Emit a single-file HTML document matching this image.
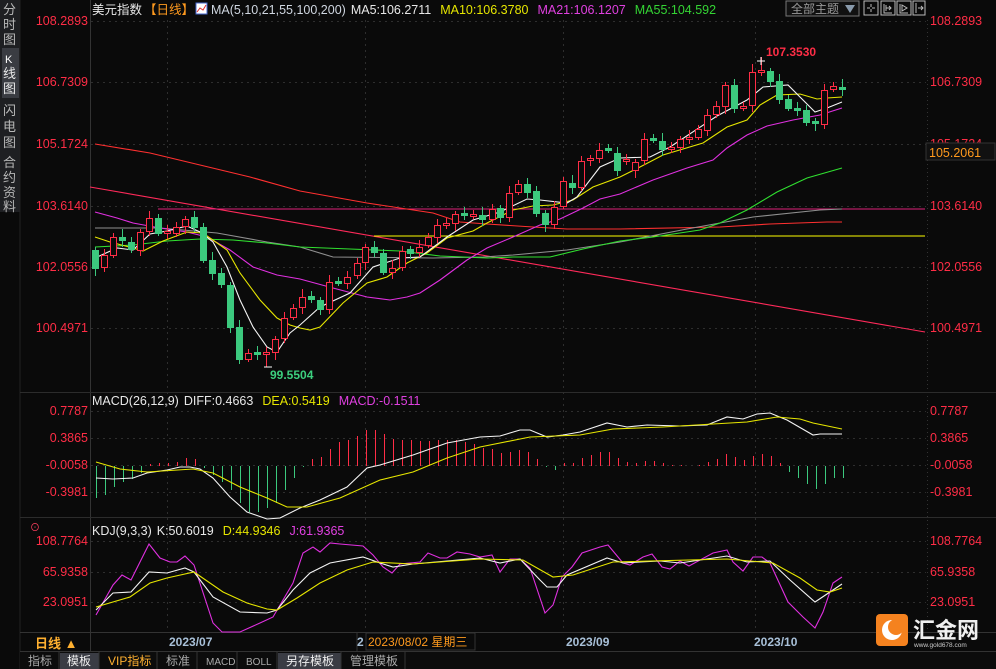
<!DOCTYPE html>
<html><head><meta charset="utf-8">
<style>
html,body{margin:0;padding:0;background:#0a0a0a;width:996px;height:669px;overflow:hidden}
svg{display:block}
text{font-family:"Liberation Sans","Noto Sans CJK SC",sans-serif}
.ax{fill:#ff2d46;font-size:12.5px}
.cn{font-family:"Liberation Sans","Noto Sans CJK SC",sans-serif}
</style></head><body>
<svg id="s" width="996" height="669" viewBox="0 0 996 669" xmlns="http://www.w3.org/2000/svg">
<rect width="996" height="669" fill="#0a0a0a"/>
<rect x="0" y="0" width="20" height="212" fill="#1e1f22"/>
<rect x="2" y="48" width="17" height="50" fill="#3a3c42"/>
<g fill="#b8b8b8" font-size="13" class="cn">
<text x="3" y="14">分</text><text x="3" y="29">时</text><text x="3" y="44">图</text>
<text x="5" y="63" fill="#fff" font-size="11">K</text><text x="3" y="78" fill="#e8e8e8">线</text><text x="3" y="93" fill="#e8e8e8">图</text>
<text x="3" y="115">闪</text><text x="3" y="131">电</text><text x="3" y="147">图</text>
<text x="3" y="167">合</text><text x="3" y="182">约</text><text x="3" y="197">资</text><text x="3" y="211">料</text>
</g>
<line x1="20" y1="0" x2="20" y2="669" stroke="#222" />
<line x1="90.5" y1="0" x2="90.5" y2="652" stroke="#333"/>
<line x1="927.5" y1="20" x2="927.5" y2="632" stroke="#333" stroke-dasharray="1,3"/>
<line x1="20" y1="392.5" x2="996" y2="392.5" stroke="#2c2c2c"/>
<line x1="20" y1="517.5" x2="996" y2="517.5" stroke="#2c2c2c"/>
<line x1="20" y1="632.5" x2="996" y2="632.5" stroke="#333"/>
<line x1="20" y1="651.5" x2="996" y2="651.5" stroke="#333"/>
<g id="grid" stroke="#2e2e2e" stroke-dasharray="2,4"></g>
<text x="92" y="14" font-size="12.5" fill="#e8e8e8">美元指数</text>
<text x="144" y="14" font-size="12.5" fill="#ff9a1e">【日线】</text>
<rect x="196" y="3" width="11" height="11" fill="#fff" stroke="#4466cc"/>
<polyline points="197,12 200,8 203,10 206,5" fill="none" stroke="#e03030" stroke-width="1"/>
<text x="211" y="14" font-size="12.5"><tspan fill="#cfd6e0">MA(5,10,21,55,100,200)</tspan><tspan fill="#e8e8e8" dx="5">MA5:106.2711</tspan><tspan fill="#e6e600" dx="9">MA10:106.3780</tspan><tspan fill="#e040e0" dx="9">MA21:106.1207</tspan><tspan fill="#34d434" dx="9">MA55:104.592</tspan></text>
<rect x="786" y="1" width="73" height="15" fill="#111" stroke="#777"/>
<text x="791" y="13" font-size="12" fill="#999">全部主题</text>
<path d="M845 5 L855 5 L850 13 Z" fill="#8899aa"/>
<g fill="none" stroke="#bbb">
<rect x="864" y="1" width="14" height="14"/><rect x="881" y="1" width="14" height="14"/><rect x="897" y="1" width="14" height="14"/><rect x="913" y="1" width="12" height="14"/>
<path d="M871 4v3M871 9v3M867 8h3M872 8h3"/>
<path d="M884 4v9h8M886 5v6M889 6l2 2-2 2M886 8h5"/>
<path d="M900 4v9h8M902 5l5 3-5 3z"/>
<path d="M916 3v10M918 8h5M921 6l2 2-2 2"/>
</g>
<g class="ax" id="axl"></g>
<rect x="926" y="143" width="69" height="17" fill="#111" stroke="#333"/>
<text x="929" y="157" font-size="12.5" fill="#ff9a1e">105.2061</text>
<g id="lines" fill="none" stroke-width="1.1"></g>
<g id="candles"></g>
<text x="766" y="56" font-size="12" font-weight="bold" fill="#ff2d46">107.3530</text>
<text x="270" y="379" font-size="12" font-weight="bold" fill="#3ccf7e">99.5504</text>
<text x="92" y="405" font-size="12.5"><tspan fill="#e8e8e8">MACD(26,12,9)</tspan><tspan fill="#e8e8e8" dx="5">DIFF:0.4663</tspan><tspan fill="#e6e600" dx="9">DEA:0.5419</tspan><tspan fill="#e040e0" dx="9">MACD:-0.1511</tspan></text>
<g id="macd"></g>
<text x="30" y="531" font-size="10" fill="#ff4060">⊙</text>
<text x="92" y="535" font-size="12.5"><tspan fill="#e8e8e8">KDJ(9,3,3)</tspan><tspan fill="#e8e8e8" dx="5">K:50.6019</tspan><tspan fill="#e6e600" dx="9">D:44.9346</tspan><tspan fill="#e040e0" dx="9">J:61.9365</tspan></text>
<g id="kdj" fill="none" stroke-width="1.1"></g>
<text x="35" y="648" font-size="13" fill="#ffb030" font-weight="bold">日线 ▲</text>
<text x="169" y="646" font-size="12" fill="#a8c0d8" font-weight="bold">2023/07</text>
<line x1="357" y1="633" x2="357" y2="651" stroke="#333"/>
<text x="357" y="646" font-size="12" fill="#a8c0d8" font-weight="bold">2</text>
<rect x="366" y="633" width="109" height="17" fill="#0a0a0a" stroke="#333"/>
<text x="368" y="646" font-size="12" fill="#ff9a1e">2023/08/02 星期三</text>
<text x="566" y="646" font-size="12" fill="#a8c0d8" font-weight="bold">2023/09</text>
<text x="754" y="646" font-size="12" fill="#a8c0d8" font-weight="bold">2023/10</text>
<rect x="20" y="652" width="976" height="17" fill="#0c0c0c"/>
<rect x="60" y="653" width="39" height="16" fill="#3a3c44"/>
<rect x="278" y="653" width="63" height="16" fill="#3a3c44"/>
<g font-size="12" fill="#aaa">
<text x="28" y="665">指标</text><text x="67" y="665" fill="#eee">模板</text><text x="108" y="665" fill="#ffb030">VIP指标</text><text x="166" y="665">标准</text>
<text x="206" y="665" font-family="Liberation Mono" font-size="10">MACD</text><text x="246" y="665" font-family="Liberation Mono" font-size="10">BOLL</text>
<text x="286" y="665" fill="#eee">另存模板</text><text x="350" y="665">管理模板</text>
</g>
<g stroke="#333"><line x1="59" y1="652" x2="59" y2="669"/><line x1="99" y1="652" x2="99" y2="669"/><line x1="157" y1="652" x2="157" y2="669"/><line x1="197" y1="652" x2="197" y2="669"/><line x1="237" y1="652" x2="237" y2="669"/><line x1="277" y1="652" x2="277" y2="669"/><line x1="341" y1="652" x2="341" y2="669"/><line x1="405" y1="652" x2="405" y2="669"/></g>
<rect x="876" y="614" width="32" height="32" rx="4" fill="#f5821f"/>
<circle cx="892" cy="630" r="10" fill="#fff"/>
<circle cx="896" cy="627" r="8" fill="#f5821f"/>
<text x="913" y="638" font-size="22" fill="#f0f0f0" font-weight="bold">汇金网</text>
<text x="914" y="647" font-size="6.5" fill="#ccc">www.gold678.com</text>
<script>
var NS="http://www.w3.org/2000/svg";
function el(p,t,a){var e=document.createElementNS(NS,t);for(var k in a)e.setAttribute(k,a[k]);document.getElementById(p).appendChild(e);return e;}
[21,82,144,206,267,328,411,438,465,492,541,572,602].forEach(function(y){el("grid","line",{x1:91,y1:y+0.5,x2:926,y2:y+0.5});});
[167,365,563,755].forEach(function(x){el("grid","line",{x1:x+0.5,y1:20,x2:x+0.5,y2:632});});
var L=[["108.2893",25],["106.7309",86],["105.1724",148],["103.6140",210],["102.0556",271],["100.4971",332],["0.7787",415],["0.3865",442],["-0.0058",469],["-0.3981",496],["108.7764",545],["65.9358",576],["23.0951",606]];
L.forEach(function(l){var t=el("axl","text",{x:88,y:l[1],"text-anchor":"end"});t.textContent=l[0];var u=el("axl","text",{x:930,y:l[1]});u.textContent=l[0];});
function pl(g,c,pts,w){el(g,"polyline",{points:pts,stroke:c,"stroke-width":w||1.1,fill:"none"});}
pl("lines","#ff2a5a","90,187 925,332");
pl("lines","#e0207a","158,209 925,209");
pl("lines","#ffff00","374,236 925,236");
pl("lines","#ff3030","95,144 150,153 200,165 250,177 300,191 367,203 433,213 460,222 487,224 533,227 567,229 620,229 720,227 770,224 827,222 842,222");
pl("lines","#909090","95,228 160,228 217,233 267,242 300,247 333,257 433,258 483,257 513,255 567,250 620,242 687,229 753,217 820,210 842,209");
pl("lines","#30e030","95,247 133,245 167,241 200,239 233,240 267,243 300,247 350,249 400,251 440,256 487,258 513,257 550,257 583,249 620,241 653,237 700,230 720,223 747,210 777,192 807,178 842,168");
pl("lines","#e030e0","95,212 117,218 133,223 160,228 187,232 207,237 230,250 253,267 277,275 300,279 333,288 367,297 390,300 407,297 420,293 440,280 467,260 487,248 513,237 540,225 560,219 583,208 600,199 620,194 653,180 687,168 713,160 727,148 747,135 767,126 793,120 820,115 842,108");
pl("lines","#e6e600","95,237 110,242 133,248 143,251 163,241 187,232 203,233 227,250 240,273 260,300 277,318 290,325 300,328 310,330 320,327 343,303 367,283 387,277 407,263 427,253 447,238 473,231 487,223 513,210 533,206 553,205 573,200 593,187 620,177 640,167 663,155 703,143 727,127 747,120 760,105 777,95 800,94 817,99 827,98 842,97");
pl("lines","#f4f4f4","95,258 117,248 133,250 150,234 167,231 187,226 200,232 213,242 227,267 240,300 253,327 267,347 277,352 290,333 300,325 320,307 350,293 373,267 400,258 420,257 447,237 473,220 500,212 527,199 540,200 567,203 577,197 600,167 620,158 650,157 670,147 717,116 747,100 763,87 788,85 800,97 815,112 827,108 842,102");
var C=[[95,250,268,0],[104,255,267,1],[113,237,255,1],[122,237,240,0],[131,242,249,0],[140,232,250,1],[149,218,231,1],[158,218,233,0],[167,231,233,1],[176,227,233,1],[185,219,226,1],[194,217,227,0],[203,227,260,0],[212,260,273,0],[221,273,284,0],[230,285,327,0],[239,327,359,0],[248,353,359,1],[257,352,354,0],[266,352,354,1],[275,339,352,1],[284,318,338,1],[293,308,317,1],[302,297,307,1],[311,296,299,0],[320,300,309,0],[329,282,309,1],[338,281,283,0],[347,277,283,1],[357,263,275,1],[365,247,262,1],[374,247,252,0],[383,253,272,0],[392,268,272,1],[402,251,267,1],[410,249,253,0],[419,247,252,1],[428,237,245,1],[437,225,237,1],[446,223,225,1],[455,214,223,1],[464,213,215,0],[473,214,216,1],[482,215,219,0],[492,209,219,1],[500,208,217,0],[509,193,217,1],[518,184,192,1],[527,184,192,0],[536,191,213,0],[545,213,224,0],[554,207,224,1],[563,181,206,1],[572,183,187,0],[581,161,187,1],[590,158,160,1],[599,150,158,1],[608,148,150,0],[617,153,170,0],[626,159,161,1],[635,162,170,1],[644,139,160,1],[653,138,140,0],[662,141,149,0],[671,147,149,1],[680,139,147,1],[689,137,139,1],[698,129,137,1],[707,115,130,1],[716,106,114,1],[725,85,106,1],[734,85,108,0],[743,106,108,1],[752,72,105,1],[761,70,72,1],[770,71,81,0],[779,81,99,0],[788,99,108,0],[797,108,110,0],[806,110,122,0],[815,121,123,0],[824,90,124,1],[833,86,89,1],[842,87,89,0]];
var wk=[3,6,4,8,5,3,7,4,6,5];
C.forEach(function(c,i){var col=c[3]?"#ff2d46":"#3cc97e";var hi=c[1]-wk[i%10],lo=c[2]+wk[(i+3)%10];
if(c[0]==266)lo=367;if(c[0]==761)hi=57;
el("candles","line",{x1:c[0]+0.5,y1:hi,x2:c[0]+0.5,y2:lo,stroke:col});
var h=Math.max(c[2]-c[1],1);
if(c[3])el("candles","rect",{x:c[0]-2.5,y:c[1]+0.5,width:6,height:h,fill:"#0a0a0a",stroke:col});
else el("candles","rect",{x:c[0]-3,y:c[1],width:7,height:h+1,fill:col});});
el("candles","path",{d:"M757 61h8M761 57v8M264 367h8",stroke:"#fff"});
var H=[498,495,487,482,479,473,464,463,463,462,458,459,468,475,482,490,503,512,512,508,503,490,478,467,459,457,449,442,440,436,430,430,434,439,440,440,441,441,440,440,440,442,444,448,449,453,452,450,452,459,467,470,463,463,458,455,452,452,458,462,463,461,461,463,465,465,466,465,462,459,454,457,460,456,454,456,463,472,478,484,489,484,478,478];
H.forEach(function(y,i){var x=Math.round(96+9*i)+0.5;el("macd","line",{x1:x,y1:466,x2:x,y2:y,stroke:y<466?"#ff2d46":"#3cc97e","stroke-width":1});});
pl("macd","#f4f4f4","96,478 113,479 133,478 147,473 167,470 180,467 190,467 200,469 213,478 230,497 247,512 267,519 280,518 300,508 320,500 347,487 367,468 380,465 413,455 447,443 480,437 500,436 520,430 530,430 547,437 563,435 580,432 607,423 627,427 647,425 680,426 707,425 727,417 743,419 757,414 770,413 787,420 813,435 820,434 842,434");
pl("macd","#e6e600","96,462 120,469 147,472 193,469 213,473 240,487 267,498 287,507 307,507 340,498 380,480 413,472 447,458 480,447 530,437 580,435 613,429 663,427 713,424 747,422 777,417 800,419 813,423 842,429");
pl("kdj","#e030e0","96,615 113,585 122,575 131,580 149,544 160,558 170,562 177,562 185,556 194,565 213,623 222,632 240,632 260,623 273,617 293,583 303,553 313,547 320,552 330,543 340,544 363,546 373,555 383,567 392,573 400,564 420,562 428,553 440,558 447,558 457,552 470,554 480,557 492,555 500,572 510,559 520,559 530,568 545,613 553,605 562,577 572,567 582,553 600,547 608,545 623,563 630,565 643,557 652,554 662,567 670,569 680,561 689,566 713,553 727,550 733,562 743,571 753,557 762,557 770,563 788,602 803,617 815,628 823,612 833,583 842,577");
pl("kdj","#f4f4f4","96,610 113,593 131,592 149,572 167,573 185,568 194,572 213,597 240,612 267,613 277,610 293,590 310,573 330,563 363,557 380,563 393,567 413,564 447,561 480,558 500,563 520,559 540,580 547,587 557,587 567,575 607,558 623,563 640,562 660,561 680,563 727,556 747,562 770,561 790,580 815,602 842,584");
pl("kdj","#e6e600","96,607 130,597 150,583 167,578 194,572 223,592 247,603 267,609 277,610 297,598 320,583 347,570 373,562 413,564 480,559 523,560 553,577 573,575 613,562 727,559 773,563 800,578 817,590 830,592 842,588");
</script>
</svg>
</body></html>
